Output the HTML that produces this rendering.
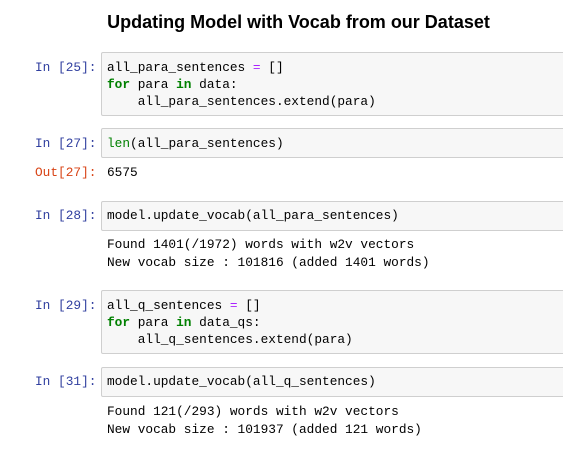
<!DOCTYPE html><html><head><style>
body{margin:0;width:563px;height:461px;background:#fff;overflow:hidden;position:relative;font-family:"Liberation Mono",monospace;font-size:12.8px}
.t{position:absolute;left:0;width:597px;text-align:center;top:12px;font:bold 18px "Liberation Sans",sans-serif;color:#000}
.box{position:absolute;left:101px;width:480px;background:#f7f7f7;border:1px solid #cfcfcf;border-radius:2px;box-sizing:border-box}
.p{position:absolute;white-space:pre;line-height:17px;color:#000}
.in{color:#303f9f;left:35px}.out{color:#d84315;left:35px}
.k{color:#008000;font-weight:bold}.o{color:#aa22ff}
</style></head><body>
<div class="t">Updating Model with Vocab from our Dataset</div>
<div class="box" style="top:52px;height:64px"></div>
<div class="p in" style="top:59px">In [25]:</div>
<div class="p" style="left:107px;top:59px">all_para_sentences <span class="o">=</span> []
<span class="k">for</span> para <span class="k">in</span> data:
    all_para_sentences.extend(para)</div>
<div class="box" style="top:128px;height:30px"></div>
<div class="p in" style="top:135px">In [27]:</div>
<div class="p" style="left:107px;top:135px"><span style="color:#008000">len</span>(all_para_sentences)</div>
<div class="p out" style="top:164px">Out[27]:</div>
<div class="p" style="left:107px;top:164px">6575</div>
<div class="box" style="top:201px;height:30px"></div>
<div class="p in" style="top:207px">In [28]:</div>
<div class="p" style="left:107px;top:207px">model.update_vocab(all_para_sentences)</div>
<div class="p" style="left:107px;top:236px;line-height:17.5px">Found 1401(/1972) words with w2v vectors
New vocab size : 101816 (added 1401 words)</div>
<div class="box" style="top:290px;height:64px"></div>
<div class="p in" style="top:297px">In [29]:</div>
<div class="p" style="left:107px;top:297px">all_q_sentences <span class="o">=</span> []
<span class="k">for</span> para <span class="k">in</span> data_qs:
    all_q_sentences.extend(para)</div>
<div class="box" style="top:367px;height:30px"></div>
<div class="p in" style="top:373px">In [31]:</div>
<div class="p" style="left:107px;top:373px">model.update_vocab(all_q_sentences)</div>
<div class="p" style="left:107px;top:403px;line-height:17.5px">Found 121(/293) words with w2v vectors
New vocab size : 101937 (added 121 words)</div>
</body></html>
